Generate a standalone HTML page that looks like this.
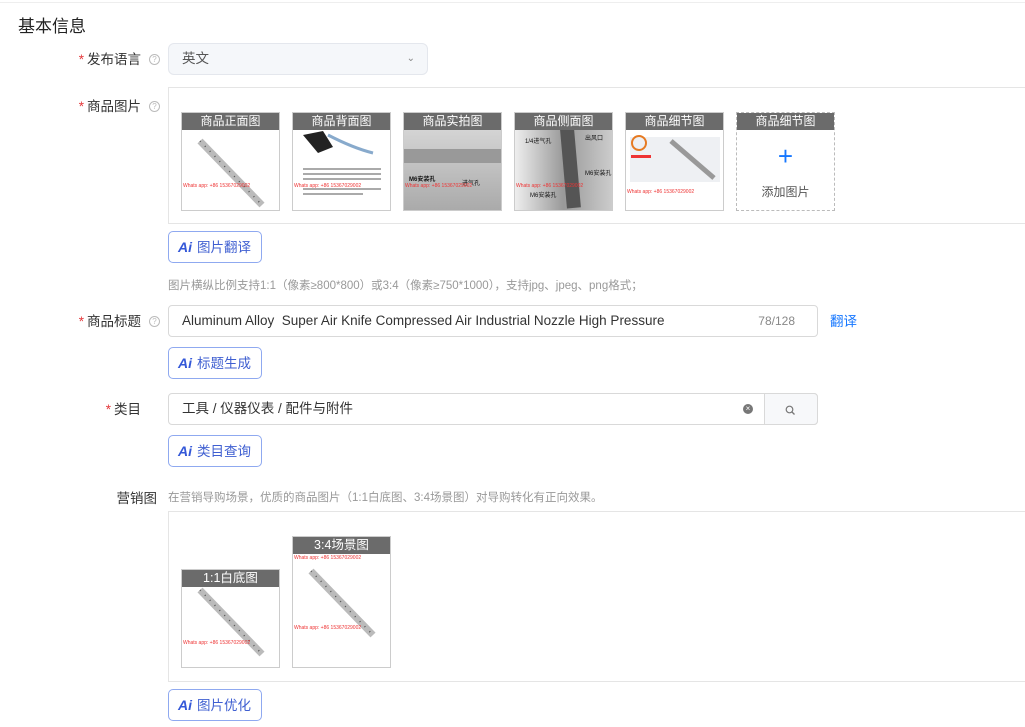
<!DOCTYPE html>
<html><head><meta charset="utf-8"><style>
*{box-sizing:border-box;margin:0;padding:0}
body{width:1025px;height:727px;background:#fff;position:relative;overflow:hidden;font-family:"Liberation Sans","Noto Sans CJK SC",sans-serif;color:#333}
.a{position:absolute}
.lbl{position:absolute;font-size:13.5px;color:#333;text-align:right;width:141px;left:0}
.lbl i{font-style:normal;color:#e4393c;margin-right:3px}
.q{position:absolute;width:11px;height:11px;border:1px solid #bbb;border-radius:50%;font-size:8px;color:#bbb;text-align:center;line-height:9px}
.inp{position:absolute;border:1px solid #d9d9d9;border-radius:4px;height:32px;font-size:13.5px;line-height:30px;padding-left:13px;color:#333}
.ai{position:absolute;left:168px;width:94px;height:32px;border:1px solid #8fa9f0;border-radius:5px;font-size:13.5px;line-height:30px;color:#3f5fd1;padding-left:9px}
.ai b{font-style:italic;font-weight:900;color:#3458d8;margin-right:5px;font-size:14px}
.th{position:absolute;width:99px;height:99px;border:1px solid #ccc;background:#fff;overflow:hidden}
.th .h{position:absolute;left:0;top:0;width:100%;height:17px;background:#6b6b6b;color:#fff;font-size:12px;text-align:center;line-height:17px;z-index:2}
.th .w{position:absolute;font-size:5px;color:#e33;left:1px;white-space:nowrap}
.box{position:absolute;left:168px;border:1px solid #e5e5e5;border-right:none;width:857px}
</style></head><body>
<div class="a" style="left:0;top:2px;width:1025px;height:1px;background:#eee"></div>
<div class="a" style="left:18px;top:12px;font-size:17px;color:#222">基本信息</div>

<div class="lbl" style="top:48px"><i>*</i>发布语言</div><div class="q" style="left:149px;top:54px">?</div>
<div class="inp" style="left:168px;top:43px;width:260px;background:#f5f7fa;border-color:#e4e7ed;color:#555;border-radius:6px">英文<span class="a" style="right:12px;top:0;font-size:10px;color:#888">&#8964;</span></div>

<div class="lbl" style="top:95px"><i>*</i>商品图片</div><div class="q" style="left:149px;top:101px">?</div>
<div class="box" style="top:87px;height:137px"></div>
<svg width="0" height="0" style="position:absolute"><defs><g id="bar"><line x1="18" y1="28" x2="80" y2="92" stroke="#bbb" stroke-width="7"/><line x1="18" y1="28" x2="80" y2="92" stroke="#555" stroke-width="1.5" stroke-dasharray="1 6"/></g></defs></svg>
<div class="th" style="left:181px;top:112px"><div class="h">商品正面图</div><svg class="a" width="99" height="99"><use href="#bar"/></svg><div class="w" style="top:70px">Whats app: +86 15367029002</div></div>
<div class="th" style="left:292px;top:112px"><div class="h">商品背面图</div><svg class="a" width="99" height="99"><path d="M10 22 L30 18 L40 34 L25 40Z" fill="#222"/><path d="M35 22 Q60 35 80 40" stroke="#8ac" fill="none" stroke-width="3"/><g fill="#aaa"><rect x="10" y="55" width="78" height="2"/><rect x="10" y="60" width="78" height="2"/><rect x="10" y="65" width="78" height="2"/><rect x="10" y="75" width="78" height="2"/><rect x="10" y="80" width="60" height="2"/></g></svg><div class="w" style="top:70px">Whats app: +86 15367029002</div></div>
<div class="th" style="left:403px;top:112px;background:linear-gradient(180deg,#ddd,#aaa)"><div class="h">商品实拍图</div><svg class="a" width="99" height="99"><rect x="0" y="36" width="99" height="14" fill="#999"/><text x="5" y="68" font-size="6" font-weight="bold" fill="#111">M6安装孔</text><text x="58" y="72" font-size="6" fill="#111">进气孔</text></svg><div class="w" style="top:70px">Whats app: +86 15367029002</div></div>
<div class="th" style="left:514px;top:112px;background:linear-gradient(90deg,#eee,#999 50%,#ccc)"><div class="h">商品侧面图</div><svg class="a" width="99" height="99"><rect x="48" y="10" width="14" height="85" fill="#555" transform="rotate(-5 55 50)"/><text x="10" y="30" font-size="6" fill="#111">1/4进气孔</text><text x="70" y="27" font-size="6" fill="#111">出风口</text><text x="70" y="62" font-size="6" fill="#111">M6安装孔</text><text x="15" y="84" font-size="6" fill="#111">M6安装孔</text></svg><div class="w" style="top:70px">Whats app: +86 15367029002</div></div>
<div class="th" style="left:625px;top:112px"><div class="h">商品细节图</div><svg class="a" width="99" height="99"><rect x="4" y="24" width="90" height="45" fill="#eef0f3"/><circle cx="13" cy="30" r="7" fill="none" stroke="#e67a22" stroke-width="2"/><line x1="45" y1="28" x2="88" y2="65" stroke="#999" stroke-width="5"/><rect x="5" y="42" width="20" height="3" fill="#e33"/></svg><div class="w" style="top:76px">Whats app: +86 15367029002</div></div>
<div class="th" style="left:736px;top:112px;border:1px dashed #bbb"><div class="h">商品细节图</div><div class="a" style="left:0;width:97px;top:28px;text-align:center;font-size:26px;color:#1677ff;font-weight:300">+</div><div class="a" style="left:0;width:97px;top:70px;text-align:center;font-size:12px;color:#555">添加图片</div></div>

<div class="ai" style="top:231px"><b>Ai</b>图片翻译</div>
<div class="a" style="left:168px;top:277px;font-size:11.5px;color:#999">图片横纵比例支持1:1（像素≥800*800）或3:4（像素≥750*1000），支持jpg、jpeg、png格式；</div>

<div class="lbl" style="top:310px"><i>*</i>商品标题</div><div class="q" style="left:149px;top:316px">?</div>
<div class="inp" style="left:168px;top:305px;width:650px">Aluminum Alloy&nbsp; Super Air Knife Compressed Air Industrial Nozzle High Pressure<span class="a" style="right:22px;top:0;font-size:12px;color:#888">78/128</span></div>
<div class="a" style="left:830px;top:310px;font-size:13.5px;color:#1677ff">翻译</div>
<div class="ai" style="top:347px"><b>Ai</b>标题生成</div>

<div class="lbl" style="top:398px"><i>*</i>类目</div>
<div class="inp" style="left:168px;top:393px;width:650px">工具 / 仪器仪表 / 配件与附件<span class="a" style="left:574px;top:10px;width:10px;height:10px;border-radius:50%;background:#777;color:#fff;font-size:8px;line-height:10px;text-align:center">×</span></div>
<div class="a" style="left:764px;top:393px;width:54px;height:32px;border:1px solid #d9d9d9;background:#f7f8fa;border-radius:0 4px 4px 0"><svg class="a" style="left:20px;top:11px" width="11" height="11" viewBox="0 0 11 11"><circle cx="4.5" cy="4.5" r="3.3" fill="none" stroke="#777" stroke-width="1.2"/><line x1="7" y1="7" x2="9.5" y2="9.5" stroke="#777" stroke-width="1.3"/></svg></div>
<div class="ai" style="top:435px"><b>Ai</b>类目查询</div>

<div class="lbl" style="top:487px;width:157px">营销图</div>
<div class="a" style="left:168px;top:489px;font-size:11.5px;color:#999">在营销导购场景，优质的商品图片（1:1白底图、3:4场景图）对导购转化有正向效果。</div>
<div class="box" style="top:511px;height:171px"></div>
<div class="th" style="left:181px;top:569px"><div class="h" style="font-size:12.5px">1:1白底图</div><svg class="a" width="99" height="99"><use href="#bar" transform="translate(0,-8)"/></svg><div class="w" style="top:70px">Whats app: +86 15367029002</div></div>
<div class="th" style="left:292px;top:536px;height:132px"><div class="h" style="font-size:12.5px">3:4场景图</div><svg class="a" width="99" height="132"><use href="#bar" transform="translate(0,6)"/></svg><div class="w" style="top:18px">Whats app: +86 15367029002</div><div class="w" style="top:88px">Whats app: +86 15367029002</div></div>
<div class="ai" style="top:689px"><b>Ai</b>图片优化</div>
</body></html>
